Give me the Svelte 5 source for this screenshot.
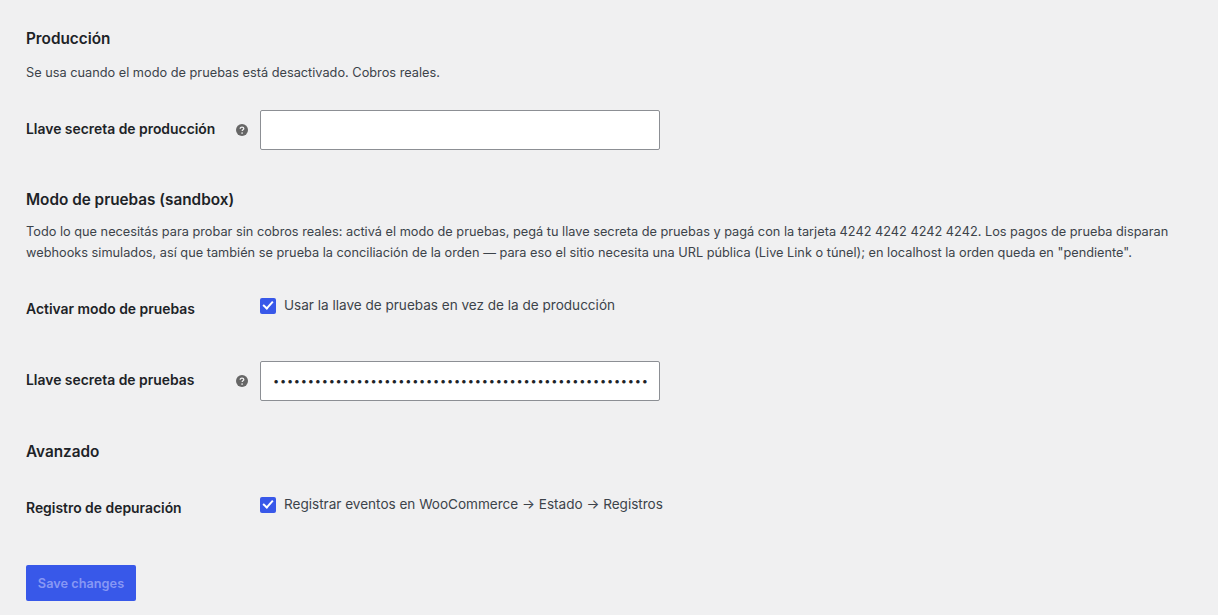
<script lang="ts">
	let prodKey = $state('');
	let testKey = $state('sk_test_00000000000000000000000000000000000000000000000');
	let testMode = $state(true);
	let debugLog = $state(true);
</script>

{#snippet help()}
	<svg class="help" viewBox="0 0 12 12" aria-hidden="true">
		<circle cx="6" cy="6" r="6" fill="#666" />
		<path d="M4.2 4.7c0-1 .8-1.6 1.8-1.6s1.8.6 1.8 1.5c0 1.2-1.6 1.2-1.6 2.4" fill="none" stroke="#f0f0f1" stroke-width="1.3" />
		<circle cx="6.1" cy="9" r=".85" fill="#f0f0f1" />
	</svg>
{/snippet}

<form class="settings" onsubmit={(e) => e.preventDefault()}>
	<h2 class="first">Producción</h2>
	<p class="desc">Se usa cuando el modo de pruebas está desactivado. Cobros reales.</p>

	<div class="row row-input prod">
		<label for="prod-key">Llave secreta de producción</label>
		{@render help()}
		<input id="prod-key" type="password" bind:value={prodKey} />
	</div>

	<h2 class="sandbox">Modo de pruebas (sandbox)</h2>
	<p class="desc long">
		Todo lo que necesitás para probar sin cobros reales: activá el modo de pruebas, pegá tu llave secreta de pruebas y pagá con la tarjeta 4242 4242 4242 4242. Los pagos de prueba disparan webhooks simulados, así que también se prueba la conciliación de la orden — para eso el sitio necesita una URL pública (Live Link o túnel); en localhost la orden queda en "pendiente".
	</p>

	<div class="row row-check test-mode">
		<span class="label">Activar modo de pruebas</span>
		<label class="check">
			<input type="checkbox" bind:checked={testMode} />
			<span>Usar la llave de pruebas en vez de la de producción</span>
		</label>
	</div>

	<div class="row row-input test-key">
		<label for="test-key">Llave secreta de pruebas</label>
		{@render help()}
		<input id="test-key" type="password" bind:value={testKey} />
	</div>

	<h2 class="advanced">Avanzado</h2>

	<div class="row row-check debug">
		<span class="label">Registro de depuración</span>
		<label class="check">
			<input type="checkbox" bind:checked={debugLog} />
			<span>Registrar eventos en WooCommerce → Estado → Registros</span>
		</label>
	</div>

	<button type="submit">Save changes</button>
</form>

<style>
	:global(body) {
		background: #f0f0f1;
	}

	.settings {
		padding: 0 26px 14px;
		font-family: Inter, 'Noto Sans', sans-serif;
		font-size: 13.55px;
		line-height: 21px;
		color: #3c434a;
	}

	h2 {
		margin: 0;
		font-size: 15.3px;
		font-weight: 600;
		line-height: 20px;
		color: #1d2327;
	}

	.first {
		padding-top: 29px;
	}

	.sandbox {
		margin-top: 40px;
	}

	.advanced {
		margin-top: 41px;
	}

	.desc {
		margin: 13px 0 0;
		font-size: 12.75px;
	}

	.long {
		margin-top: 12px;
		width: 1166px;
		line-height: 20.5px;
		padding-bottom: 1px;
	}

	.row {
		display: grid;
		grid-template-columns: 234px 1fr;
		position: relative;
	}

	.prod {
		margin-top: 27px;
	}

	.test-mode {
		margin-top: 31px;
	}

	.test-key {
		margin-top: 41px;
	}

	.debug {
		margin-top: 32px;
	}

	.row-input {
		align-items: center;
	}

	.row label:first-child,
	.label {
		font-size: 13.9px;
		font-weight: 600;
		color: #1d2327;
	}

	.row-input label {
		padding-bottom: 2px;
	}

	.row-check .label {
		padding-top: 4px;
	}

	.help {
		position: absolute;
		left: 210px;
		top: 14px;
		width: 12px;
		height: 12px;
	}

	input[type='password'] {
		box-sizing: border-box;
		width: 400px;
		height: 40px;
		margin: 0;
		padding: 0 12px;
		background: #fff;
		border: 1px solid #8c8f94;
		border-radius: 2px;
		color: #1d2327;
		font-family: inherit;
		font-size: 11px;
		letter-spacing: 0.77px;
		outline: none;
	}

	.check {
		display: flex;
		align-items: center;
		gap: 8px;
		height: 21px;
	}

	.check input {
		appearance: none;
		box-sizing: border-box;
		display: grid;
		place-items: center;
		width: 16px;
		height: 16px;
		margin: 0;
		background: #3858e9;
		border-radius: 2px;
	}

	.check input:checked::before {
		content: '';
		width: 8px;
		height: 4px;
		margin-top: -3px;
		border-left: 2px solid #fff;
		border-bottom: 2px solid #fff;
		transform: rotate(-48deg);
	}

	button {
		display: block;
		width: 110px;
		height: 36px;
		margin-top: 46px;
		padding: 0;
		background: #3858e9;
		border: none;
		border-radius: 2px;
		color: #8797f4;
		font-family: inherit;
		font-size: 12.75px;
		font-weight: 600;
	}
</style>
